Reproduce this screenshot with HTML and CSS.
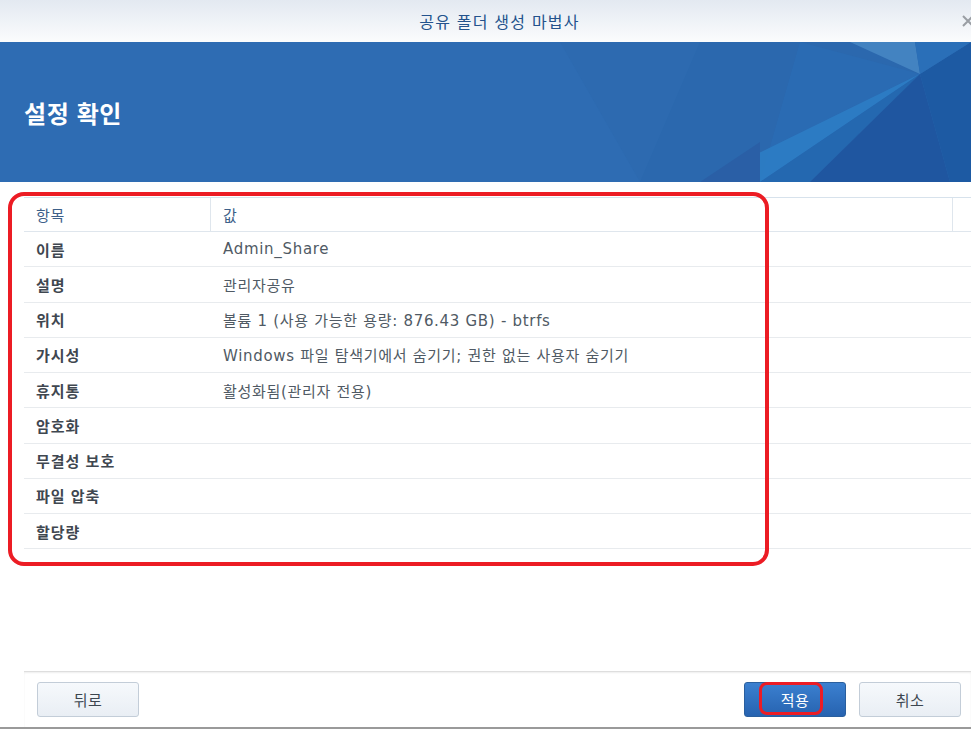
FILE: index.html
```html
<!DOCTYPE html>
<html lang="ko">
<head>
<meta charset="utf-8">
<link rel="stylesheet" href="styles.css">
</head>
<body>
<div class="window">
  <div class="titlebar">
    <span class="title">공유 폴더 생성 마법사</span>
    <span class="close">
      <svg width="14" height="14" viewBox="0 0 14 14"><path d="M2 2 L12 12 M12 2 L2 12" stroke="#9a9ea4" stroke-width="2" fill="none"/></svg>
    </span>
  </div>
  <div class="banner">
    <svg class="banner-art" width="971" height="140" viewBox="0 0 971 140" preserveAspectRatio="none">
      <polygon points="560,0 971,0 971,140 640,140" fill="#2d6ab0"/>
      <polygon points="700,0 920,0 920,32 760,140 640,140" fill="#2b68ae"/>
      <polygon points="800,0 920,32 760,140" fill="#2a6cb4" opacity="0.9"/>
      <polygon points="920,32 760,140 700,140" fill="#2d7fc7" opacity="0.8"/>
      <polygon points="920,32 810,140 760,140" fill="#2468b0"/>
      <polygon points="920,32 810,140 950,140" fill="#1f56a0"/>
      <polygon points="920,32 971,0 971,140 950,140" fill="#1d5aa3"/>
      <polygon points="850,0 915,0 920,32" fill="#4a8ac6" opacity="0.8"/>
      <polygon points="915,0 971,0 920,32" fill="#2a6fb8"/>
      <polygon points="700,140 760,100 760,140" fill="#2a5fa6"/>
    </svg>
    <h1 class="banner-title">설정 확인</h1>
  </div>
  <div class="content">
    <div class="grid">
      <div class="row head">
        <div class="c1">항목</div>
        <div class="c2">값</div>
        <div class="c3"></div>
      </div>
      <div class="row"><div class="c1 lab">이름</div><div class="c2">Admin_Share</div></div>
      <div class="row"><div class="c1 lab">설명</div><div class="c2">관리자공유</div></div>
      <div class="row"><div class="c1 lab">위치</div><div class="c2">볼륨 1 (사용 가능한 용량: 876.43 GB) - btrfs</div></div>
      <div class="row"><div class="c1 lab">가시성</div><div class="c2">Windows 파일 탐색기에서 숨기기; 권한 없는 사용자 숨기기</div></div>
      <div class="row"><div class="c1 lab">휴지통</div><div class="c2">활성화됨(관리자 전용)</div></div>
      <div class="row"><div class="c1 lab">암호화</div><div class="c2"></div></div>
      <div class="row"><div class="c1 lab">무결성 보호</div><div class="c2"></div></div>
      <div class="row"><div class="c1 lab">파일 압축</div><div class="c2"></div></div>
      <div class="row"><div class="c1 lab">할당량</div><div class="c2"></div></div>
    </div>
    <div class="mark-table"></div>
  </div>
  <div class="footer">
    <button class="btn">뒤로</button>
    <div class="spacer"></div>
    <button class="btn primary">적용<span class="mark-btn"></span></button>
    <button class="btn">취소</button>
  </div>
</div>
</body>
</html>
```
FILE: styles.css
```css
* { box-sizing: border-box; }
html, body { margin: 0; padding: 0; }
body {
  width: 971px;
  height: 729px;
  overflow: hidden;
  background: #ffffff;
  font-family: "DejaVu Sans", "Noto Sans CJK KR", sans-serif;
}
.window {
  position: relative;
  width: 971px;
  height: 729px;
  display: flex;
  flex-direction: column;
  border-bottom: 2px solid #9a9a9a;
}
.titlebar {
  position: relative;
  height: 42px;
  flex: none;
  background: linear-gradient(#e3e9f1, #fbfcfd);
  display: flex;
  align-items: center;
  justify-content: center;
  padding-left: 28px;
}
.title {
  font-family: "Noto Sans CJK KR", sans-serif;
  font-size: 16px;
  color: #23528c;
  letter-spacing: 1.2px;
}
.close {
  position: absolute;
  right: -4px;
  top: 14px;
  width: 14px;
  height: 14px;
}
.close svg { display: block; }
.banner {
  position: relative;
  height: 140px;
  flex: none;
  background: #2e6cb3;
  display: flex;
  align-items: center;
  padding-left: 24px;
  overflow: hidden;
}
.banner-art {
  position: absolute;
  left: 0;
  top: 0;
}
.banner-title {
  position: relative;
  margin: 0;
  font-family: "Noto Sans CJK KR", sans-serif;
  font-size: 24px;
  font-weight: 700;
  color: #ffffff;
  letter-spacing: 0.6px;
}
.content {
  position: relative;
  flex: 1;
  padding: 15px 0 0 24px;
}
.grid {
  border-top: 1px solid #d7e2ec;
}
.row {
  display: flex;
  height: 35.25px;
  border-bottom: 1px solid #e8ebee;
  align-items: center;
  font-size: 15px;
  letter-spacing: 0.7px;
}
.row.head {
  height: 34px;
  border-bottom: 1px solid #dfe6ed;
  align-items: stretch;
}
.row.head > div {
  display: flex;
  align-items: center;
  color: #3d6089;
  font-family: "Noto Sans CJK KR", sans-serif;
  font-size: 15px;
}
.c1 {
  width: 187px;
  padding-left: 12px;
  flex: none;
}
.row.head .c1 { border-right: 1px solid #dfe6ed; }
.c2 {
  flex: 1;
  padding-left: 12px;
  color: #505a64;
}
.row.head .c2 { flex: none; width: 742px; border-right: 1px solid #dfe6ed; }
.row.head .c3 { flex: 1; }
.lab {
  font-family: "Noto Sans CJK KR", sans-serif;
  font-weight: 700;
  color: #3f4750;
  font-size: 15px;
  letter-spacing: 1px;
}
.mark-table {
  position: absolute;
  left: 8px;
  top: 10px;
  width: 761px;
  height: 374px;
  border: 4px solid #ec1c24;
  border-radius: 16px;
  pointer-events: none;
}
.footer {
  flex: none;
  height: 56px;
  margin-left: 24px;
  border-top: 1px solid #dedede;
  box-shadow: inset 0 1px 2px #eeeeee;
  display: flex;
  align-items: flex-start;
  padding: 10px 10px 0 13px;
  gap: 13px;
}
.spacer { flex: 1; }
.btn {
  position: relative;
  width: 102px;
  height: 35px;
  border: 1px solid #c3cdd8;
  border-radius: 3px;
  background: linear-gradient(#f6f9fc, #e9eef4);
  font-family: "Noto Sans CJK KR", sans-serif;
  font-size: 15px;
  color: #3c4650;
  padding: 0;
  letter-spacing: 0.5px;
}
.btn.primary {
  background: linear-gradient(#3b80d0, #2763b0);
  border-color: #2a5f9e;
  color: #ffffff;
}
.mark-btn {
  position: absolute;
  left: 14px;
  top: -1px;
  width: 64px;
  height: 33px;
  border: 3px solid #ec1c24;
  border-radius: 8px;
}
```
